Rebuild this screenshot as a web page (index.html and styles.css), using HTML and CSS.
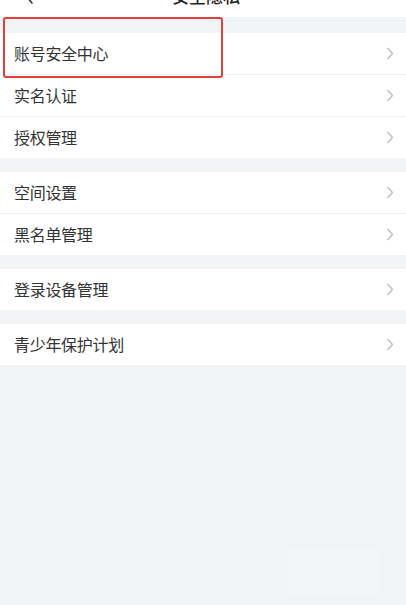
FILE: index.html
```html
<!DOCTYPE html>
<html lang="zh-CN">
<head>
<meta charset="utf-8">
<link rel="stylesheet" href="styles.css">
</head>
<body>
<div class="page">
  <div class="topbar">
    <div class="topbar-inner">
      <svg class="back" width="10" height="16" viewBox="0 0 10 16"><path d="M8 1 L2 8 L8 15" fill="none" stroke="#333" stroke-width="1.6" stroke-linecap="round" stroke-linejoin="round"/></svg>
      <span class="title">安全隐私</span>
    </div>
  </div>

  <div class="group">
    <div class="row"><span class="label">账号安全中心</span><svg class="chev" width="8" height="13" viewBox="0 0 8 13"><path d="M1.5 1 L6.5 6.5 L1.5 12" fill="none" stroke="#bcbcbc" stroke-width="1.3"/></svg></div>
    <div class="row"><span class="label">实名认证</span><svg class="chev" width="8" height="13" viewBox="0 0 8 13"><path d="M1.5 1 L6.5 6.5 L1.5 12" fill="none" stroke="#bcbcbc" stroke-width="1.3"/></svg></div>
    <div class="row"><span class="label">授权管理</span><svg class="chev" width="8" height="13" viewBox="0 0 8 13"><path d="M1.5 1 L6.5 6.5 L1.5 12" fill="none" stroke="#bcbcbc" stroke-width="1.3"/></svg></div>
  </div>

  <div class="group">
    <div class="row"><span class="label">空间设置</span><svg class="chev" width="8" height="13" viewBox="0 0 8 13"><path d="M1.5 1 L6.5 6.5 L1.5 12" fill="none" stroke="#bcbcbc" stroke-width="1.3"/></svg></div>
    <div class="row"><span class="label">黑名单管理</span><svg class="chev" width="8" height="13" viewBox="0 0 8 13"><path d="M1.5 1 L6.5 6.5 L1.5 12" fill="none" stroke="#bcbcbc" stroke-width="1.3"/></svg></div>
  </div>

  <div class="group">
    <div class="row"><span class="label">登录设备管理</span><svg class="chev" width="8" height="13" viewBox="0 0 8 13"><path d="M1.5 1 L6.5 6.5 L1.5 12" fill="none" stroke="#bcbcbc" stroke-width="1.3"/></svg></div>
  </div>

  <div class="group">
    <div class="row"><span class="label">青少年保护计划</span><svg class="chev" width="8" height="13" viewBox="0 0 8 13"><path d="M1.5 1 L6.5 6.5 L1.5 12" fill="none" stroke="#bcbcbc" stroke-width="1.3"/></svg></div>
  </div>

  <div class="highlight"></div>
  <div class="ghost"></div>
</div>
</body>
</html>
```

FILE: styles.css
```css
* { box-sizing: border-box; }
html, body {
  margin: 0;
  padding: 0;
  background: #f2f3f5;
}
body {
  font-family: "Noto Sans CJK SC", "Noto Sans", sans-serif;
  color: #333;
}
.page {
  position: relative;
  width: 406px;
  min-height: 605px;
  background: #f2f3f5;
  display: flex;
  flex-direction: column;
  gap: 14px;
}
.topbar {
  height: 17px;
  overflow: hidden;
  background: #fff;
  margin-bottom: 2px;
}
.topbar-inner {
  position: relative;
  height: 22px;
  margin-top: -15px;
  display: flex;
  align-items: center;
  justify-content: center;
}
.title {
  font-size: 17px;
  line-height: 22px;
  font-weight: 500;
  color: #222;
  margin-left: 6px;
}
.back {
  position: absolute;
  left: 24px;
  top: 3px;
}
.group {
  background: #fff;
  display: flex;
  flex-direction: column;
}
.row {
  height: 41px;
  display: flex;
  align-items: center;
  justify-content: space-between;
  padding: 0 12px 0 14px;
}
.row + .row {
  border-top: 1px solid #f0f0f2;
  height: 42px;
}
.label {
  font-size: 16px;
  line-height: 20px;
  margin-top: -2px;
  letter-spacing: -0.3px;
  color: #333;
}
.chev {
  display: block;
}
.highlight {
  position: absolute;
  left: 3px;
  top: 17px;
  width: 220px;
  height: 61px;
  border: 2px solid #e0403a;
  border-radius: 3px;
}
.ghost {
  position: absolute;
  left: 288px;
  top: 548px;
  width: 92px;
  height: 47px;
  background: #f4f5f6;
  border-radius: 3px;
  filter: blur(2px);
}
```
